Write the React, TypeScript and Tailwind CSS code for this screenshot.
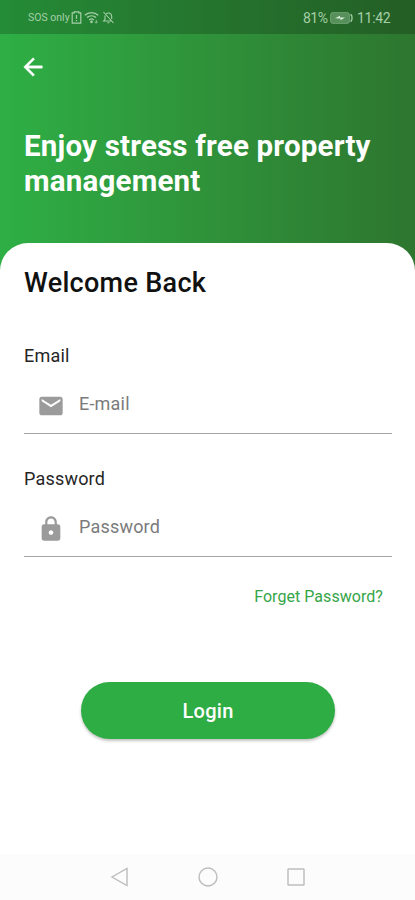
import React from "react";

type FieldProps = { label: string; placeholder: string; path: string; type: string };

const MAIL = "M20 4H4c-1.1 0-1.99.9-1.99 2L2 18c0 1.1.9 2 2 2h16c1.1 0 2-.9 2-2V6c0-1.1-.9-2-2-2zm0 4l-8 5-8-5V6l8 5 8-5v2z";
const LOCK = "M18 8h-1V6c0-2.76-2.24-5-5-5S7 3.24 7 6v2H6c-1.1 0-2 .9-2 2v10c0 1.1.9 2 2 2h12c1.1 0 2-.9 2-2V10c0-1.1-.9-2-2-2zm-6 9c-1.1 0-2-.9-2-2s.9-2 2-2 2 .9 2 2-.9 2-2 2zm3.1-9H8.9V6c0-1.71 1.39-3.1 3.1-3.1 1.71 0 3.1 1.39 3.1 3.1v2z";

function StatusBar() {
  return (
    <div className="flex h-[34px] items-center justify-between bg-black/20 pl-[28px] pr-[25px] pt-px text-[#a6cfa8]">
      <div className="flex items-center">
        <span className="w-[42px] whitespace-nowrap pt-[2px] text-[10.5px] leading-none">SOS only</span>
        <svg className="ml-[1px] h-[13px] w-[11px]" viewBox="0 0 11 13" fill="none" stroke="currentColor" strokeWidth="1.2">
          <path d="M3.2 1.8V.8h4.6v1h2v10.4H1.2V1.8zM5.5 4v3.8M5.5 9v1.3" />
        </svg>
        <svg className="ml-[2px] h-[13px] w-[15px]" viewBox="0 0 15 13" fill="none" stroke="currentColor" strokeWidth="1.3">
          <path d="M.8 4.3C4.6.6 10.4.6 14.2 4.3M3 6.6c2.6-2.4 6.4-2.4 9 0M5.2 8.9c1.3-1.2 3.3-1.2 4.6 0" />
          <circle cx="7.5" cy="10.8" r=".7" fill="currentColor" />
          <path d="M12.3 9v3M11 10.8l1.3 1.4 1.3-1.4" strokeWidth=".8" />
        </svg>
        <svg className="ml-[3px] h-[13px] w-[13px]" viewBox="0 0 13 13" fill="none" stroke="currentColor" strokeWidth="1.1">
          <path d="M1.5 1l10 11M4.2 2.7C6.7.9 9.7 2.7 9.7 5.3V8M3 4.5v3.8L1.6 10h8M5.4 11.8h2" />
        </svg>
      </div>
      <div className="flex items-center">
        <span className="w-[25px] whitespace-nowrap text-[14px] leading-none tracking-[-0.5px]">81%</span>
        <svg className="ml-[2px] h-[12px] w-[23px]" viewBox="0 0 23 12" fill="none">
          <rect x=".5" y=".5" width="19" height="11" rx="2.5" fill="currentColor" fillOpacity=".4" stroke="currentColor" strokeOpacity=".4" />
          <path d="M5 6.3L10 3.7v1.8h5L10.5 8.3V6.5z" fill="#dcefdc" />
          <path d="M20.5 2.5c2 .5 2 6.5 0 7" stroke="currentColor" strokeWidth="1.3" />
        </svg>
        <span className="ml-[4px] w-[33px] whitespace-nowrap text-[14px] leading-none tracking-[-0.3px]">11:42</span>
      </div>
    </div>
  );
}

function Field({ label, placeholder, path, type }: FieldProps) {
  return (
    <label className="block h-[123px]">
      <span className="block h-[22px] text-[18px] leading-[22px] tracking-[0.2px] text-[#252525]">{label}</span>
      <span className="mt-[13px] flex h-[54px] items-center border-b border-[#a5a5a5] pb-[7px] pl-[13px]">
        <svg className="mt-[6px] h-7 w-7 shrink-0 fill-[#9b9b9b]" viewBox="0 0 24 24">
          <path d={path} />
        </svg>
        <input
          type={type}
          placeholder={placeholder}
          className="ml-[14px] h-6 min-w-0 flex-1 bg-transparent text-[18px] tracking-[0.2px] outline-none placeholder:text-[#7b7b7b]"
        />
      </span>
    </label>
  );
}

export default function App() {
  return (
    <div className="flex h-[900px] w-full flex-col overflow-hidden bg-linear-to-r from-[#2eaf45] to-[#2d762f] font-['Roboto',sans-serif]">
      <StatusBar />
      <header className="h-[209px] pl-6 pt-[19px] text-white">
        <button className="-ml-[5px] block" aria-label="Back">
          <svg className="h-7 w-7 fill-white stroke-white" strokeWidth=".35" viewBox="0 0 24 24">
            <path d="M20 11H7.83l5.59-5.59L12 4l-8 8 8 8 1.41-1.41L7.83 13H20z" />
          </svg>
        </button>
        <h1 className="mt-[48px] whitespace-nowrap text-[29.5px] font-bold leading-[35px] tracking-[0.2px]">
          Enjoy stress free property
          <br />
          management
        </h1>
      </header>
      <main className="flex flex-1 flex-col rounded-t-[28px] bg-white">
        <div className="flex-1 pl-6 pr-[23px] pt-[23px]">
          <h2 className="text-[27px] font-medium leading-[35px] tracking-[0.3px] text-[#111]">Welcome Back</h2>
          <div className="mt-[44px]">
            <Field label="Email" placeholder="E-mail" path={MAIL} type="email" />
            <Field label="Password" placeholder="Password" path={LOCK} type="password" />
          </div>
          <div className="-mt-[6px] pr-[9px] text-right text-[16px] leading-6 tracking-[0.05px] text-[#35a548]">Forget Password?</div>
          <button className="ml-[57px] mt-[73px] block h-[57px] w-[254px] rounded-full bg-[#2fad45] text-[20px] font-medium tracking-[0.3px] text-white shadow-[0_2px_3px_rgba(0,0,0,0.24)]">
            Login
          </button>
        </div>
        <nav className="flex h-[46px] items-center justify-center gap-[66px] bg-[#fcfcfc]">
          <svg className="h-[22px] w-[22px]" viewBox="0 0 22 22" fill="none" stroke="#bdbdbd" strokeWidth="1.4"><path d="M18 2.5v17L3 11z" /></svg>
          <svg className="h-[22px] w-[22px]" viewBox="0 0 22 22" fill="none" stroke="#bdbdbd" strokeWidth="1.4"><circle cx="11" cy="11" r="9" /></svg>
          <svg className="h-[22px] w-[22px]" viewBox="0 0 22 22" fill="none" stroke="#bdbdbd" strokeWidth="1.4"><rect x="3" y="3" width="16" height="16" rx=".5" /></svg>
        </nav>
      </main>
    </div>
  );
}
